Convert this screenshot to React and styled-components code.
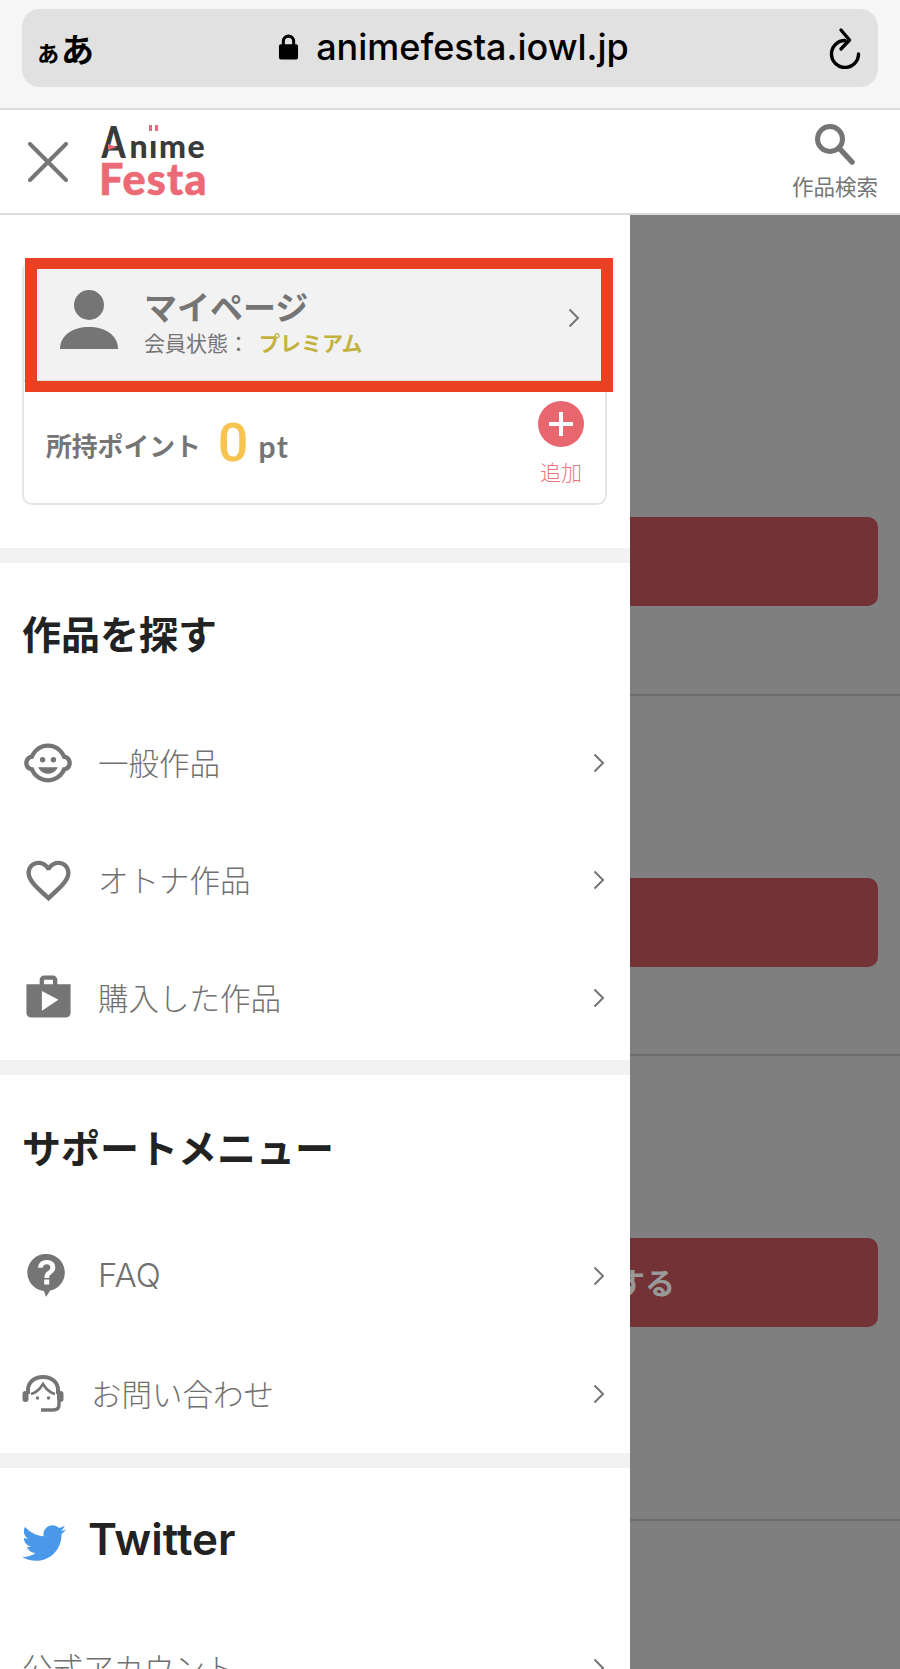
import React from "react";
import styled, { createGlobalStyle } from "styled-components";
import { MdChildCare, MdFavoriteBorder, MdShop } from "react-icons/md";
import { FaTwitter } from "react-icons/fa";

const GlobalStyle = createGlobalStyle`
  html, body {
    margin: 0;
    padding: 0;
    background: #fff;
  }
  * {
    box-sizing: border-box;
  }
`;

const JP = `"Noto Sans CJK JP", "Noto Sans", sans-serif`;
const LATIN = `Inter, "Noto Sans CJK JP", sans-serif`;

const Chevron = ({ lift = 0 }) => (
  <ChevronIcon viewBox="0 0 12 20" width={12} height={20} $lift={lift}>
    <polyline points="1.5,1.5 10,10 1.5,18.5" fill="none" stroke="#757575" strokeWidth="2" />
  </ChevronIcon>
);

const App = () => {
  return (
    <Page>
      <GlobalStyle />
      <BrowserBar>
        <AddressBar>
          <ReaderLabel>
            <small>ぁ</small>あ
          </ReaderLabel>
          <UrlGroup>
            <svg width="21" height="28" viewBox="0 0 22 28">
              <path
                d="M4 11V8a7 7 0 0 1 14 0v3h1a2 2 0 0 1 2 2v12a2 2 0 0 1-2 2H3a2 2 0 0 1-2-2V13a2 2 0 0 1 2-2h1zm3.2 0h7.6V8a3.8 3.8 0 0 0-7.6 0v3z"
                fill="#000"
              />
            </svg>
            <UrlText>animefesta.iowl.jp</UrlText>
          </UrlGroup>
          <svg width="36" height="42" viewBox="0 0 36 42">
            <path
              d="M19 13.500A13.500 13.500 0 1 0 32.500 27"
              fill="none"
              stroke="#000"
              strokeWidth="3.4"
              strokeLinecap="round"
            />
            <polyline
              points="15,3 23.500,13 15,22"
              fill="none"
              stroke="#000"
              strokeWidth="3.4"
              strokeLinecap="round"
              strokeLinejoin="round"
            />
          </svg>
        </AddressBar>
      </BrowserBar>

      <Header>
        <CloseButton>
          <svg width="40" height="40" viewBox="0 0 40 40">
            <path d="M2 2L38 38M38 2L2 38" stroke="#757575" strokeWidth="4" strokeLinecap="round" />
          </svg>
        </CloseButton>
        <Logo>
          <LogoTop>
            <LogoBigLetter>A</LogoBigLetter>n<LogoDots>ı</LogoDots>me
            <LogoFlag />
          </LogoTop>
          <LogoBottom>Festa</LogoBottom>
        </Logo>
        <SearchButton>
          <svg width="44" height="44" viewBox="0 0 44 44">
            <circle cx="17" cy="17" r="12.5" fill="none" stroke="#757575" strokeWidth="5" />
            <path d="M26 26L39 40" stroke="#757575" strokeWidth="5.5" strokeLinecap="round" />
          </svg>
          <SearchLabel>作品検索</SearchLabel>
        </SearchButton>
      </Header>

      <Body>
        <Drawer>
          <AccountArea>
            <AccountCard>
              <MyPageRow>
                <svg width="60" height="60" viewBox="0 0 60 60">
                  <ellipse cx="30" cy="15" rx="15" ry="15" fill="#757575" />
                  <path d="M1 59c0-14 13-22 29-22s29 8 29 22z" fill="#757575" />
                </svg>
                <MyPageText>
                  <MyPageTitle>マイページ</MyPageTitle>
                  <MemberLine>
                    会員状態：<MemberPlan>プレミアム</MemberPlan>
                  </MemberLine>
                </MyPageText>
                <Chevron lift={3} />
              </MyPageRow>
              <PointsRow>
                <PointsLabel>所持ポイント</PointsLabel>
                <PointsValue>0</PointsValue>
                <PointsUnit>pt</PointsUnit>
                <AddButton>
                  <svg width="46" height="46" viewBox="0 0 46 46">
                    <circle cx="23" cy="23" r="23" fill="#e8676f" />
                    <path d="M23 11V35M11 23H35" stroke="#fff" strokeWidth="4" />
                  </svg>
                  <AddLabel>追加</AddLabel>
                </AddButton>
              </PointsRow>
              <Highlight />
            </AccountCard>
          </AccountArea>

          <Band />

          <SectionHeading>作品を探す</SectionHeading>
          <MenuRow>
            <IconSlot>
              <MdChildCare size={52} color="#757575" />
            </IconSlot>
            <MenuText>一般作品</MenuText>
            <Chevron />
          </MenuRow>
          <MenuRow>
            <IconSlot>
              <MdFavoriteBorder size={53} color="#757575" />
            </IconSlot>
            <MenuText>オトナ作品</MenuText>
            <Chevron />
          </MenuRow>
          <MenuRow>
            <IconSlot>
              <MdShop size={53} color="#757575" />
            </IconSlot>
            <MenuText>購入した作品</MenuText>
            <Chevron />
          </MenuRow>

          <Band $gap={3} />

          <SectionHeading $shift={3}>サポートメニュー</SectionHeading>
          <MenuRow>
            <IconSlot>
              <svg width="46" height="46" viewBox="0 0 46 46">
                <path
                  fillRule="evenodd"
                  d="M24.5 1a18.5 18.5 0 0 1 3.6 36.6L24 44l-2-6.100A18.500 18.500 0 0 1 24.500 1zm-2.300 25.500v5h5v-5zM24.800 7c-5 0-8.500 3-8.800 7.800h4.700c.2-2.300 1.800-3.500 4-3.500s3.700 1.200 3.700 3.100c0 1.700-1.100 2.600-2.800 3.900-2.100 1.500-3.100 3.100-3.100 5.700v1h4.700v-.7c0-1.500.7-2.200 2.400-3.500 2.200-1.600 3.700-3.400 3.700-6.400C33.300 9.800 29.800 7 24.800 7z"
                  fill="#757575"
                />
              </svg>
            </IconSlot>
            <MenuText $size={33}>FAQ</MenuText>
            <Chevron />
          </MenuRow>
          <MenuRow>
            <IconSlot $width={69}>
              <svg width="42" height="38" viewBox="0 0 42 38">
                <path
                  d="M6 19V15C6 7 12.500 2 21 2S36 7 36 15V19"
                  fill="none"
                  stroke="#757575"
                  strokeWidth="4"
                />
                <path
                  d="M9 19C13 18 18 14 21 9C24 14 29 18 33 19"
                  fill="none"
                  stroke="#757575"
                  strokeWidth="2.600"
                />
                <path d="M37 26V30C37 33 35 35 31 35H19" fill="none" stroke="#757575" strokeWidth="3.400" />
                <rect x="0.500" y="16" width="6" height="11" rx="3" fill="#757575" />
                <rect x="35" y="16" width="6.500" height="11" rx="3" fill="#757575" />
                <circle cx="15.500" cy="23" r="1.700" fill="#757575" />
                <circle cx="26.500" cy="23" r="1.700" fill="#757575" />
              </svg>
            </IconSlot>
            <MenuText>お問い合わせ</MenuText>
            <Chevron />
          </MenuRow>

          <Band />

          <SectionHeading $latin>
            <TwitterIcon size={44} color="#4a98e9" />
            Twitter
          </SectionHeading>
          <MenuRow>
            <MenuText>公式アカウント</MenuText>
            <Chevron />
          </MenuRow>
        </Drawer>

        <Backdrop>
          <ClippedButton $top={302} />
          <Divider $top={88} />
          <ClippedButton $top={182} />
          <Divider $top={87} />
          <ClippedButton $top={182}>
            <ClippedLabel>する</ClippedLabel>
          </ClippedButton>
          <Divider $top={192} />
        </Backdrop>
      </Body>
    </Page>
  );
};

export default App;

// Styled Components
const Page = styled.div`
  width: 900px;
  height: 1669px;
  overflow: hidden;
  background: #fff;
`;

const BrowserBar = styled.div`
  height: 110px;
  padding: 9px 22px 0;
  background: #f6f6f6;
  border-bottom: 2px solid #dcdcdc;
`;

const AddressBar = styled.div`
  height: 78px;
  padding: 0 16px 0 13px;
  display: flex;
  align-items: center;
  justify-content: space-between;
  background: #e1e1e1;
  border-radius: 18px;
`;

const ReaderLabel = styled.div`
  font-family: ${JP};
  font-size: 33px;
  font-weight: 700;
  color: #000;
  small {
    font-size: 26px;
  }
`;

const UrlGroup = styled.div`
  padding: 0 13px 3px 0;
  display: flex;
  align-items: center;
  gap: 17px;
`;

const UrlText = styled.div`
  font-family: ${LATIN};
  font-size: 36px;
  font-weight: 500;
  color: #000;
`;

const Header = styled.header`
  height: 105px;
  display: flex;
  align-items: center;
  background: #fff;
  border-bottom: 2px solid #dcdcdc;
`;

const CloseButton = styled.div`
  width: 99px;
  padding-left: 28px;
  display: flex;
`;

const Logo = styled.div`
  padding-bottom: 4px;
  display: flex;
  flex-direction: column;
  font-family: Lato, sans-serif;
  font-weight: 900;
`;

const LogoTop = styled.div`
  position: relative;
  height: 37px;
  font-size: 32px;
  line-height: 37px;
  color: #3a3a3a;
  letter-spacing: 1.5px;
`;

const LogoBigLetter = styled.span`
  display: inline-block;
  margin: 0 -1px 0 -1px;
  font-size: 44px;
  line-height: 37px;
  transform: scaleX(0.78);
`;

const LogoDots = styled.span`
  position: relative;
  &::before {
    content: "";
    position: absolute;
    left: 0;
    top: -1px;
    width: 9px;
    height: 6px;
    background: repeating-linear-gradient(90deg, #eb6a75 0 3px, transparent 3px 6px);
  }
`;

const LogoFlag = styled.span`
  position: absolute;
  left: 9px;
  top: 21px;
  border-left: 9px solid #eb6a75;
  border-top: 3px solid transparent;
  border-bottom: 3px solid transparent;
`;

const LogoBottom = styled.div`
  font-size: 43px;
  line-height: 37px;
  color: #eb6a75;
  letter-spacing: 1.2px;
  -webkit-text-stroke: 0.6px #eb6a75;
`;

const SearchButton = styled.div`
  margin-left: auto;
  padding-right: 22px;
  display: flex;
  flex-direction: column;
  align-items: center;
`;

const SearchLabel = styled.div`
  margin-top: 5px;
  font-family: ${JP};
  font-size: 21.5px;
  line-height: 30px;
  color: #757575;
`;

const Body = styled.div`
  display: flex;
  height: 1454px;
`;

const Drawer = styled.nav`
  flex: 0 0 630px;
  height: 100%;
  overflow: hidden;
  background: #fff;
  font-family: ${JP};
`;

const AccountArea = styled.div`
  padding: 46px 23px 43px 22px;
`;

const AccountCard = styled.div`
  position: relative;
  border: 2px solid #e5e5e5;
  border-radius: 10px;
`;

const MyPageRow = styled.div`
  height: 119px;
  padding: 0 25px 4px 35px;
  display: flex;
  align-items: center;
  background: #f2f2f2;
  border-bottom: 2px solid #e0e0e0;
  border-radius: 8px 8px 0 0;
`;

const MyPageText = styled.div`
  margin-left: 25px;
  display: flex;
  flex-direction: column;
`;

const MyPageTitle = styled.div`
  font-size: 33px;
  line-height: 44px;
  font-weight: 700;
  color: #757575;
`;

const MemberLine = styled.div`
  font-size: 21px;
  line-height: 28px;
  color: #757575;
`;

const MemberPlan = styled.span`
  margin-left: 10px;
  font-size: 21px;
  font-weight: 700;
  color: #c3b33e;
`;

const ChevronIcon = styled.svg`
  margin-left: auto;
  margin-bottom: ${(p) => p.$lift}px;
  flex: none;
`;

const PointsRow = styled.div`
  height: 121px;
  padding: 0 21px 0 22px;
  display: flex;
  align-items: center;
`;

const PointsLabel = styled.div`
  margin-top: 4px;
  font-size: 25.8px;
  font-weight: 700;
  color: #757575;
`;

const PointsValue = styled.div`
  margin-left: 17px;
  font-family: Roboto, sans-serif;
  font-size: 54px;
  font-weight: 500;
  color: #f6c44f;
`;

const PointsUnit = styled.div`
  margin: 6px 0 0 10px;
  font-family: Lato, sans-serif;
  font-size: 30px;
  font-weight: 700;
  letter-spacing: 1.5px;
  color: #757575;
`;

const AddButton = styled.div`
  margin-left: auto;
  display: flex;
  flex-direction: column;
  align-items: center;
  gap: 10px;
`;

const AddLabel = styled.div`
  font-size: 21px;
  line-height: 28px;
  font-weight: 300;
  color: #ec747c;
`;

const Highlight = styled.div`
  position: absolute;
  left: 1px;
  top: -5px;
  width: 588px;
  height: 134px;
  border-style: solid;
  border-color: #ea4023;
  border-width: 11px 12px;
`;

const Band = styled.div`
  height: 15px;
  margin-top: ${(p) => p.$gap || 0}px;
  background: #f2f2f2;
`;

const SectionHeading = styled.h2`
  height: ${(p) => (p.$latin ? 142 : 141 - (p.$shift ? 1 : 0))}px;
  margin: ${(p) => p.$shift || 0}px 0 0;
  padding: 0 22px ${(p) => (p.$latin ? "0" : "4px")};
  display: flex;
  align-items: center;
  gap: 22px;
  font-family: ${(p) => (p.$latin ? LATIN : JP)};
  font-size: ${(p) => (p.$latin ? "44px" : "39px")};
  font-weight: ${(p) => (p.$latin ? 600 : 700)};
  color: #222;
`;

const TwitterIcon = styled(FaTwitter)`
  margin-top: 8px;
`;

const MenuRow = styled.div`
  height: 117.5px;
  padding: 0 25px 0 22px;
  display: flex;
  align-items: center;
`;

const IconSlot = styled.div`
  flex: none;
  width: ${(p) => p.$width || 76}px;
  display: flex;
  align-items: center;
`;

const MenuText = styled.div`
  padding-bottom: 2px;
  font-family: ${LATIN};
  font-size: ${(p) => p.$size || 30.5}px;
  font-weight: 300;
  color: #707070;
`;

const Backdrop = styled.div`
  flex: 1;
  background: #7f7f7f;
  overflow: hidden;
`;

const ClippedButton = styled.div`
  height: 89px;
  margin-top: ${(p) => p.$top}px;
  margin-right: 22px;
  padding-bottom: 4px;
  display: flex;
  align-items: center;
  overflow: hidden;
  background: #733236;
  border-radius: 0 10px 10px 0;
  font-family: ${JP};
  font-size: 30px;
  font-weight: 700;
  color: #999;
`;

const ClippedLabel = styled.span`
  margin-left: -15px;
`;

const Divider = styled.div`
  height: 2px;
  margin-top: ${(p) => p.$top}px;
  background: #6d6d6d;
`;
